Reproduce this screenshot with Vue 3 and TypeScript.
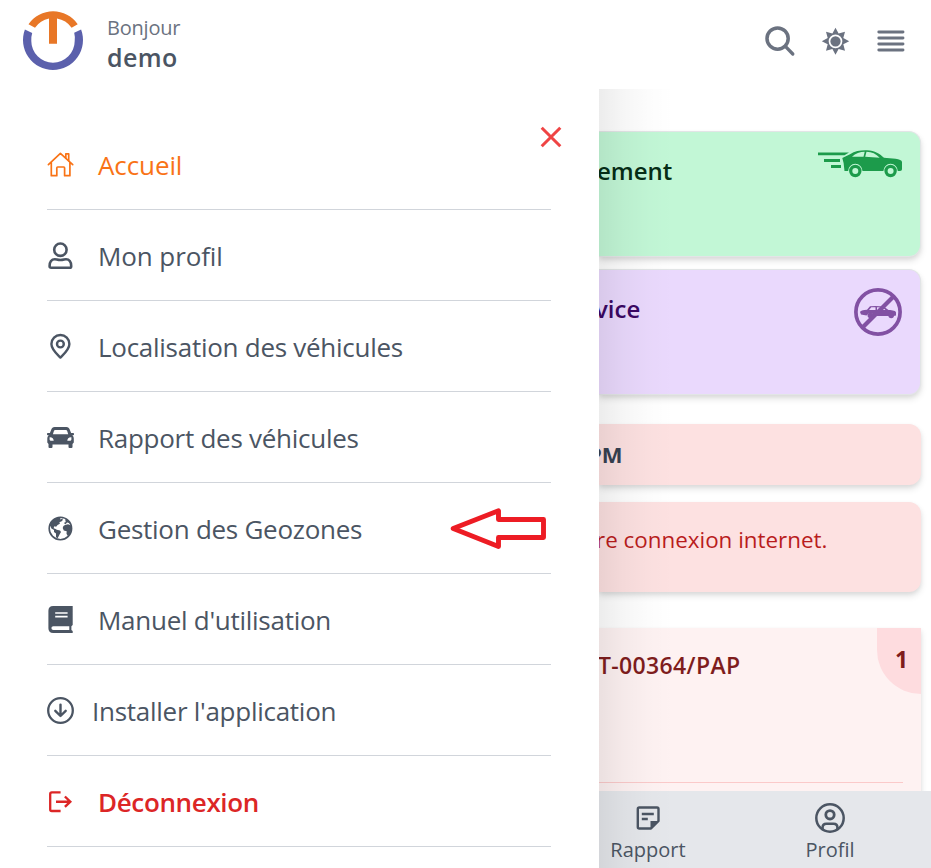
<script setup lang="ts">
interface MenuEntry {
  id: string
  label: string
  tone?: string
}

const entries: MenuEntry[] = [
  { id: 'home', label: 'Accueil', tone: 'active' },
  { id: 'user', label: 'Mon profil', tone: 'short' },
  { id: 'pin', label: 'Localisation des véhicules' },
  { id: 'car', label: 'Rapport des véhicules' },
  { id: 'globe', label: 'Gestion des Geozones' },
  { id: 'book', label: "Manuel d'utilisation" },
  { id: 'install', label: "Installer l'application", tone: 'tight' },
  { id: 'logout', label: 'Déconnexion', tone: 'danger' },
]
</script>

<template>
  <div class="app">
    <header class="header">
      <svg class="logo" viewBox="0 0 60 60">
        <path d="M1.9 18.4A30 30 0 1 0 58.1 18.4L51.2 21.7A21.7 21.7 0 0 1 51.7 30A21.7 21.7 0 0 1 8.3 30A21.7 21.7 0 0 1 9.2 21.9Z" fill="#5b60ac" />
        <path d="M5.5 13.2A30 30 0 0 1 54.7 13.2L48.6 16.7A23.5 23.5 0 0 0 34 7.6V32.8H26V7.6A23.5 23.5 0 0 0 12 16.7Z" fill="#e87727" />
      </svg>
      <div class="greeting">
        <span class="hello">Bonjour</span>
        <span class="name">demo</span>
      </div>
      <div class="tools">
        <svg width="30" height="30" viewBox="0 0 30 30" fill="none" stroke="#6b7280" stroke-linecap="round">
          <circle cx="12.6" cy="12.6" r="10.6" stroke-width="3.5" />
          <path d="M20.4 20.4L27.8 28" stroke-width="3.3" />
        </svg>
        <svg width="28" height="28" viewBox="0 0 28 28">
          <path d="M13.5 .8L16.6 6.6L23 4.7L21.3 11.1L27.2 14.2L21.3 17.3L23 23.8L16.6 22L13.5 27.7L10.4 22L4 23.8L5.7 17.3L-.2 14.2L5.7 11.1L4 4.7L10.4 6.6Z" fill="#6b7280" />
          <circle cx="13.5" cy="14.3" r="6" fill="#6b7280" stroke="#fff" stroke-width="1.7" />
        </svg>
        <svg width="28" height="28" viewBox="0 0 28 28" stroke="#6b7280" stroke-width="2.9" stroke-linecap="round">
          <path d="M1.8 5H26M1.8 11H26M1.8 17H26M1.8 23H26" />
        </svg>
      </div>
    </header>

    <div class="body">
      <aside class="drawer">
        <svg class="close" viewBox="0 0 22 22" stroke="#ef4444" stroke-width="3"><path d="M1.7 1.7L20.3 20.3M20.3 1.7L1.7 20.3" /></svg>
        <ul class="menu">
          <li v-for="e in entries" :key="e.id" class="row" :class="e.tone">
            <svg class="icon" viewBox="0 0 28 28" fill="none" stroke="currentColor" stroke-width="2" stroke-linejoin="round">
              <g v-if="e.id === 'home'" stroke-width="1.7" stroke-linecap="round">
                <path d="M1.4 13.6L13.4 2.4L25.7 13.6M4.3 11.5V24.7H9.8V16.9Q9.8 16 10.7 16H16.7Q17.6 16 17.6 16.9V24.7H22.9V11.5" />
                <path d="M18.8 7V2.9H21.7V9.6" />
              </g>
              <g v-else-if="e.id === 'user'" stroke-width="2.6">
                <circle cx="13.4" cy="7.7" r="6.2" />
                <path d="M2.6 24C2.6 20 4.6 17.2 7.8 17.2C9.3 17.2 10.6 18 13.4 18S17.5 17.2 19 17.2C22.2 17.2 24.2 20 24.2 24V24.2Q24.2 25.8 22.6 25.8H4.2Q2.6 25.8 2.6 24.2Z" />
              </g>
              <g v-else-if="e.id === 'pin'" stroke-width="2.4">
                <path d="M13.4 24.6C10 21.2 4.4 16.5 4.4 11A9 9 0 0 1 22.4 11C22.4 16.5 16.8 21.2 13.4 24.6Z" />
                <circle cx="13.4" cy="11" r="3.4" />
              </g>
              <path v-else-if="e.id === 'car'" fill="currentColor" stroke="none" fill-rule="evenodd" d="M7.6 3H19.4C21.3 3 22.1 4 22.7 5.5L24.1 9H26.2Q27 9 27 9.7V10.5Q27 11.2 26.2 11.2H25.3C26.4 12.1 26.8 13.2 26.8 14.8V18.5L25.5 20V23Q25.5 24 24.5 24H22.5Q21.5 24 21.5 23V20.5H5.5V23Q5.5 24 4.5 24H2.5Q1.5 24 1.5 23V20L.3 18.5V14.8C.3 13.2.7 12.1 1.8 11.2H.8Q0 11.2 0 10.5V9.7Q0 9 .8 9H2.9L4.3 5.5C4.9 4 5.7 3 7.6 3ZM8.2 6C7.5 6 7.1 6.3 6.9 7L5.9 10.2H21.2L20.2 7C20 6.3 19.6 6 18.9 6ZM2.6 13.3V15.2C2.6 16.3 3.3 16.8 4.5 16.8H6.7C6.8 14.8 5 13 2.6 13.3ZM24.4 13.3C22 13 20.2 14.8 20.3 16.8H22.5C23.7 16.8 24.4 16.3 24.4 15.2Z" />
              <g v-else-if="e.id === 'globe'">
                <circle cx="13.4" cy="13.5" r="11.2" stroke-width="1.6" />
                <path fill="currentColor" stroke="none" d="M2.3 12C3.1 7.3 6.3 3.8 11 2.3L14 2L13 4.5L16 3.6L15.2 6.1L12.4 7.3L12.9 8.8L10.6 9.9L9.1 11.7L7.3 11.3L6.6 13.2L8.6 14L9.8 14.8L13 15.4L14 17L12.8 19L11.8 21L10.6 23.2L9 22.2V18.6L7 16.9V14.9L4.4 13.6L3.5 10.9Z M18.2 4.4L20.5 4.7L23.1 8.3L20.1 7.4L18.5 9.2L16.8 8.1L18.7 7ZM18 10.1L21 9.2L24.4 10.6L24.7 14.6L22.7 19L20.8 20.9L19.5 18.8L19.7 16.2L16.8 15.4L15.7 13.1L16.4 10.9Z" />
              </g>
              <path v-else-if="e.id === 'book'" fill="currentColor" stroke="none" fill-rule="evenodd" d="M6.2 0H25.7V18.9L24.4 20.2V24.1L25.7 25V27H6.2Q1.4 27 1.4 22.3V4.8Q1.4 0 6.2 0ZM8.2 6.2V7.7H20.6V6.2ZM8.2 9.7V11.4H20.6V9.7ZM6.3 20.2Q4.4 20.2 4.4 22.1T6.3 24.1H22.3V20.2Z" />
              <g v-else-if="e.id === 'install'" stroke-linecap="round">
                <circle cx="13.5" cy="13.5" r="12.3" stroke-width="2.3" />
                <path d="M13.5 7.6V18.8M8.3 13.8L13.5 19L18.7 13.8" stroke-width="2.4" />
              </g>
              <g v-else>
                <path d="M13.6 4.3H4.8Q3.2 4.3 3.2 5.9V21.5Q3.2 23 4.8 23H13.6" stroke-width="2.3" />
                <path d="M9 13.7H23.5M17.9 8.5L23.3 13.7L17.9 18.9" stroke-width="2.4" stroke-linejoin="miter" />
              </g>
            </svg>
            <span class="label">{{ e.label }}</span>
          </li>
        </ul>
        <svg class="pointer" viewBox="0 0 97 42"><path d="M3.2 20.5L48.5 2.8V11.5H93.5V29.5H48.5V38.5Z" fill="#fff" stroke="#ed1c24" stroke-width="4.9" stroke-linejoin="round" /></svg>
      </aside>

      <main class="main">
        <section class="card green">
          <span class="title">ement</span>
          <svg class="fast" viewBox="0 0 84 28">
            <path fill="#1c9b4b" d="M0 2.4H31L26.5 5.3H0ZM6 9H22V12H6ZM13 15H23V18H13Z" />
            <path fill="#1c9b4b" fill-rule="evenodd" d="M24.3 8L32 4.2C37 .8 43 0 49 .2C57 .5 62 4 66 7.8C73 8.2 84 8.8 84 12V19.3Q84 21 82 21H79.8A7.2 7.2 0 1 0 65.4 21H44.5A7.2 7.2 0 1 0 30.1 21H26.5L25.6 13ZM34 6.8H45.5L46.7 1.8C42 1.8 37.5 3.4 34 6.8ZM48.5 1.8L47.2 6.8L61.7 7.7C58 4 54 1.9 48.5 1.8Z" />
            <g fill="none" stroke="#1c9b4b" stroke-width="3.2"><circle cx="37.3" cy="21" r="4.6" /><circle cx="72.6" cy="21" r="4.6" /></g>
          </svg>
        </section>
        <section class="card purple">
          <span class="title">vice</span>
          <svg class="banned" viewBox="0 0 48 48">
            <circle cx="24" cy="24" r="22.1" fill="none" stroke="#8251a3" stroke-width="3.7" />
            <path fill="#8251a3" fill-rule="evenodd" d="M6 24Q6.5 22.3 13 21.8L16 18.2Q24 17.4 30 18.8L34.5 22C39 22 42 23 42 24.5V27.5L39.5 28L38 26L35.5 28H20L18 25.5L15 25.2L12.5 27.5L7 26.5ZM15 22H21.5V19.2H17.3ZM23 22H31.5L28.8 19.6L23 19.2Z" />
            <circle cx="16.4" cy="27.5" r="2.8" fill="#8251a3" /><circle cx="37.2" cy="27.5" r="2.8" fill="#8251a3" />
            <path d="M8.5 39.5L39.5 8.5" stroke="#8251a3" stroke-width="4.2" />
          </svg>
        </section>
        <section class="card period"><span class="clock">PM</span></section>
        <section class="card alert"><span class="notice">re connexion internet.</span></section>
        <section class="card vehicle">
          <span class="plate">T-00364/PAP</span>
          <span class="count">1</span>
          <div class="rule"></div>
        </section>
        <nav class="tabs">
          <div class="tab">
            <svg viewBox="0 0 30 30">
              <path d="M6.3 4.5H24Q25.5 4.5 25.5 6V18L18 25.5H6.3Q4.8 25.5 4.8 24V6Q4.8 4.5 6.3 4.5Z" fill="none" stroke="#4b5563" stroke-width="2.4" stroke-linejoin="round" />
              <path d="M8.8 11H20.8M8.8 16H14.8" stroke="#4b5563" stroke-width="2.3" />
              <path d="M17.5 26V18H25.5Z" fill="#4b5563" />
            </svg>
            <span>Rapport</span>
          </div>
          <div class="tab">
            <svg viewBox="0 0 30 30" fill="none" stroke="#4b5563" stroke-width="2.5">
              <circle cx="15" cy="15" r="13.7" />
              <circle cx="15" cy="11.8" r="4.2" stroke-width="2.8" />
              <path d="M7.6 26V24.6Q7.6 20.8 11.4 20.8H18.6Q22.4 20.8 22.4 24.6V26" />
            </svg>
            <span>Profil</span>
          </div>
        </nav>
      </main>
    </div>
  </div>
</template>

<style>
body {
  margin: 0;
  background: #fff;
}
</style>

<style scoped>
.app {
  width: 931px;
  height: 868px;
  overflow: hidden;
  display: flex;
  flex-direction: column;
  font-family: "Open Sans", "Noto Sans", sans-serif;
  color: #4b5563;
  white-space: nowrap;
}
svg {
  display: block;
  flex: none;
  overflow: visible;
}
.header {
  box-sizing: border-box;
  height: 89px;
  flex: none;
  display: flex;
  align-items: flex-start;
  padding: 11px 26px 0 23px;
}
.logo {
  width: 60px;
  height: 60px;
}
.greeting {
  display: flex;
  flex-direction: column;
  margin-left: 24px;
  padding-top: 2px;
}
.hello {
  font-size: 20px;
  line-height: 29px;
  letter-spacing: -0.2px;
  color: #6b7280;
}
.name {
  font-size: 25px;
  line-height: 30px;
  letter-spacing: 0.4px;
  font-weight: 600;
}
.tools {
  display: flex;
  align-items: center;
  gap: 27px;
  margin-left: auto;
  padding-top: 15px;
}
.body {
  flex: 1;
  min-height: 0;
  display: flex;
}
.drawer {
  position: relative;
  z-index: 1;
  box-sizing: border-box;
  width: 599px;
  flex: none;
  padding: 30px 48px 0 47px;
  background: #fff;
}
.drawer::after {
  content: "";
  position: absolute;
  left: 100%;
  top: 0;
  bottom: 0;
  width: 75px;
  background: linear-gradient(to right, rgba(0, 0, 0, 0.075), rgba(0, 0, 0, 0.035) 33%, rgba(0, 0, 0, 0.01) 67%, transparent);
}
.close {
  position: absolute;
  left: 540px;
  top: 37px;
  width: 22px;
  height: 22px;
}
.pointer {
  position: absolute;
  left: 450px;
  top: 419px;
  width: 97px;
  height: 42px;
}
.menu {
  list-style: none;
  margin: 0;
  padding: 0;
}
.row {
  box-sizing: border-box;
  height: 91px;
  display: flex;
  align-items: center;
  gap: 23px;
  padding-top: 2px;
  border-bottom: 1px solid #d1d5db;
  font-size: 26px;
  letter-spacing: -0.27px;
}
.icon {
  width: 28px;
  height: 28px;
}
.active {
  color: #f97316;
  letter-spacing: -0.1px;
}
.short {
  letter-spacing: -0.1px;
}
.tight {
  gap: 17px;
}
.danger {
  color: #dc2626;
  font-weight: 600;
  letter-spacing: -0.35px;
}
.main {
  flex: 1;
  min-width: 0;
  overflow: hidden;
  display: flex;
  flex-direction: column;
  padding-top: 42px;
}
.card {
  box-sizing: border-box;
  flex: none;
  display: flex;
  justify-content: space-between;
  align-items: flex-start;
  margin-right: 10px;
  border-radius: 0 12px 12px 0;
  box-shadow: 0 4px 7px rgba(0, 0, 0, 0.11), 0 2px 4px rgba(0, 0, 0, 0.06);
}
.green,
.purple {
  height: 126px;
  border: 1px solid #e2e5e6;
  border-left: 0;
  padding: 18px 18px 0 0;
}
.green {
  background: #c2f7d6;
  color: #052e16;
}
.purple {
  margin-top: 12px;
  background: #ead9fd;
  color: #3b0764;
}
.title {
  font-size: 24px;
  line-height: 42px;
  font-weight: 600;
}
.green .title {
  margin-left: -2px;
}
.purple .title {
  margin-left: -4px;
}
.fast {
  width: 84px;
  height: 28px;
}
.banned {
  width: 48px;
  height: 48px;
}
.period {
  height: 61px;
  margin-top: 29px;
  background: #fde1e1;
  color: #374151;
}
.clock {
  margin-left: -11px;
  font-size: 22px;
  line-height: 61px;
  font-weight: 700;
}
.alert {
  height: 90px;
  margin-top: 17px;
  background: #fde1e1;
  color: #b91c1c;
}
.notice {
  margin-left: -3px;
  font-size: 22.4px;
  line-height: 75px;
}
.vehicle {
  height: 180px;
  margin-top: 36px;
  margin-bottom: -17px;
  flex-wrap: wrap;
  align-content: flex-start;
  border-radius: 0;
  background: #fef2f2;
  color: #7f1d1d;
}
.plate {
  margin-left: -1px;
  font-size: 23px;
  line-height: 75px;
  letter-spacing: 0.35px;
  font-weight: 600;
}
.count {
  box-sizing: border-box;
  width: 44px;
  height: 66px;
  padding-left: 18px;
  border-radius: 0 0 0 44px;
  background: #fedcdf;
  font-size: 23px;
  line-height: 62px;
  font-weight: 700;
}
.rule {
  flex: 0 0 304px;
  height: 1px;
  margin-top: 79px;
  background: #fbcaca;
}
.tabs {
  position: relative;
  flex: none;
  height: 77px;
  display: flex;
  justify-content: flex-end;
  padding-right: 10px;
  background: #e5e7eb;
}
.tab {
  width: 182px;
  flex: none;
  display: flex;
  flex-direction: column;
  align-items: center;
  padding-top: 12px;
  font-size: 20px;
  line-height: 34px;
}
.tab svg {
  width: 30px;
  height: 30px;
}
</style>
